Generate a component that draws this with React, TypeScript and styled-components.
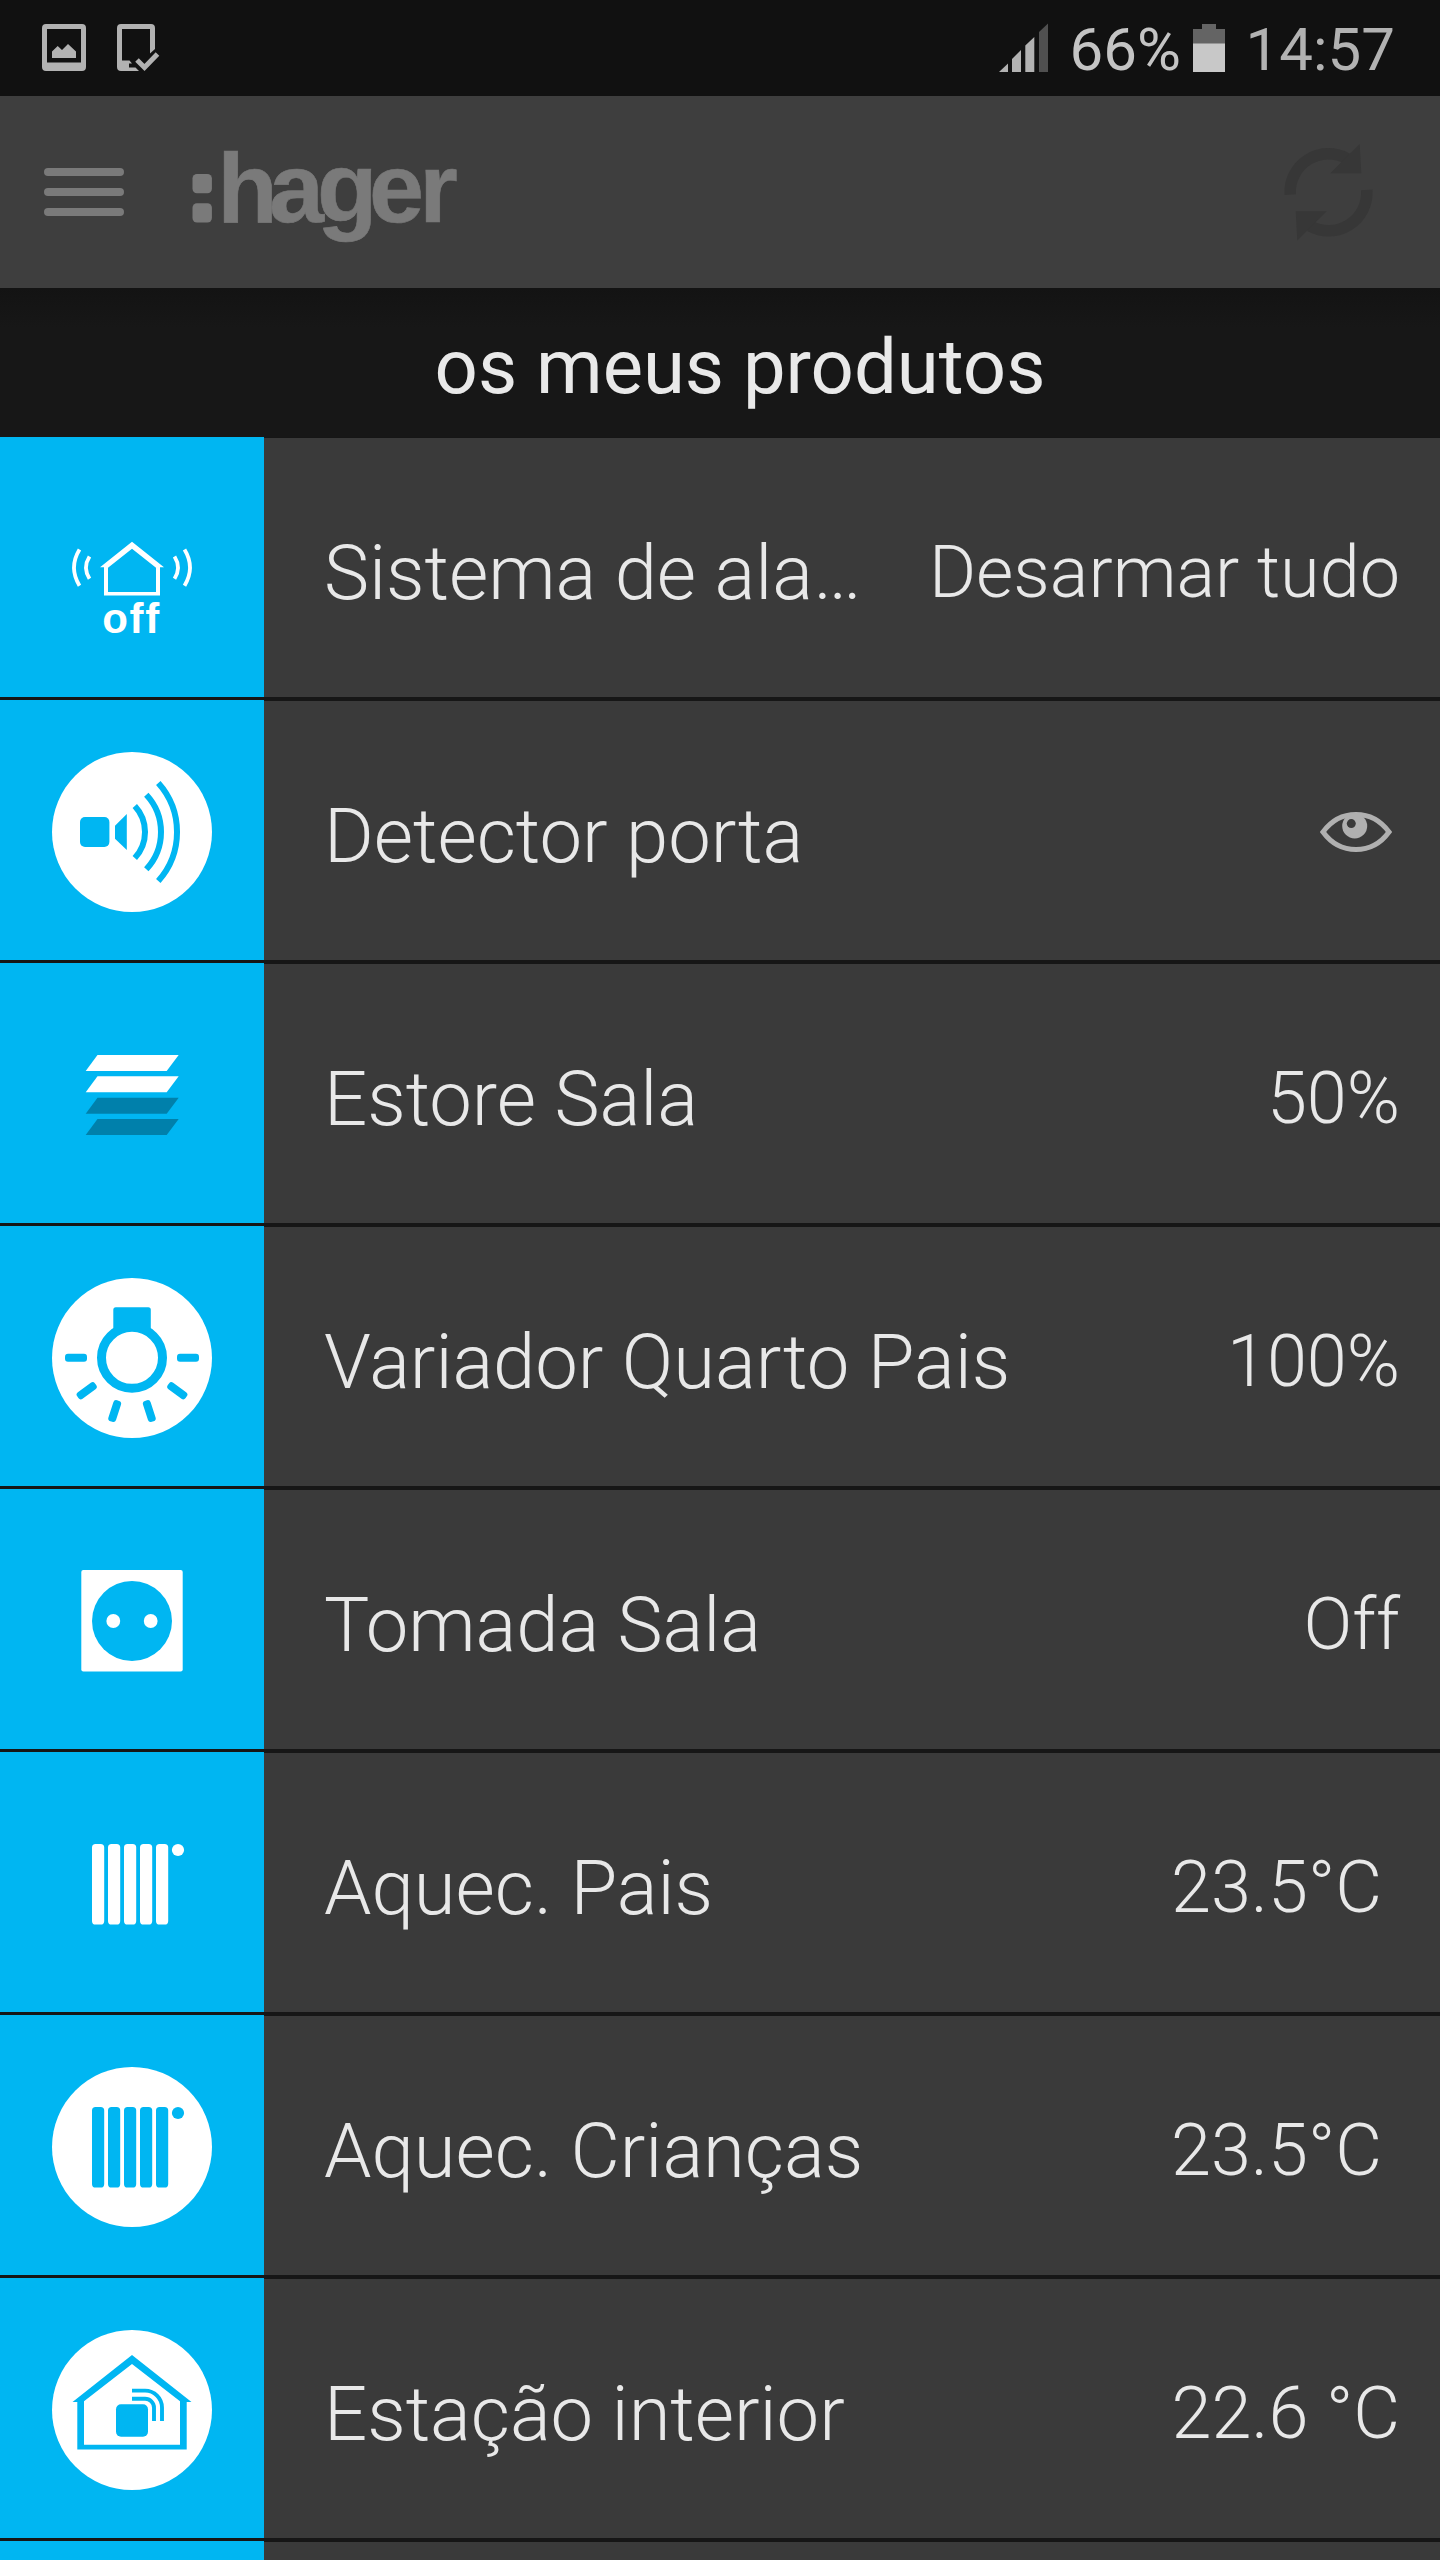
import React from "react";
import styled, { createGlobalStyle } from "styled-components";

const BLUE = "#00b6f2";

const GlobalStyle = createGlobalStyle`
  *, *::before, *::after { box-sizing: border-box; }
  body { margin: 0; background: #161616; }
  svg { display: block; flex: none; }
`;

const Screen = styled.div`
  width: 1440px;
  height: 2560px;
  overflow: hidden;
  display: flex;
  flex-direction: column;
  background: #161616;
  color: #e8e8e8;
  font-family: Roboto, "Liberation Sans", sans-serif;
`;

const StatusBar = styled.div`
  flex: none;
  height: 96px;
  padding: 0 45px 0 42px;
  display: flex;
  align-items: center;
  justify-content: space-between;
  background: #111111;
`;

const StatusGroup = styled.div<{ $gap?: number }>`
  display: flex;
  align-items: center;
  gap: ${(p) => p.$gap ?? 0}px;
`;

const StatusText = styled.span<{ $color: string; $width: number; $after?: number }>`
  width: ${(p) => p.$width}px;
  margin-right: ${(p) => p.$after ?? 0}px;
  font-size: 60px;
  line-height: 70px;
  padding-top: 3px;
  text-align: right;
  white-space: nowrap;
  color: ${(p) => p.$color};
`;

const AppBar = styled.header`
  flex: none;
  height: 192px;
  padding: 0 64px 0 44px;
  display: flex;
  align-items: center;
  background: #3e3e3e;
`;

const MenuButton = styled.div`
  width: 80px;
  display: flex;
  flex-direction: column;
  gap: 12px;
`;

const MenuLine = styled.span`
  height: 8px;
  border-radius: 4px;
  background: #7a7a7a;
`;

const Logo = styled.svg`
  margin-left: 64px;
  margin-right: auto;
`;

const TitleBar = styled.div`
  flex: none;
  height: 149px;
  padding: 8px 0 0 40px;
  display: flex;
  align-items: center;
  justify-content: center;
  background: linear-gradient(#131313, #171717 40px);
`;

const Title = styled.h1`
  margin: 0;
  font-size: 76px;
  line-height: 90px;
  font-weight: 400;
  color: #e9e9e9;
`;

const List = styled.div`
  display: flex;
  flex-direction: column;
`;

const Row = styled.div`
  flex: none;
  height: 263px;
  display: grid;
  grid-template-columns: 264px 1fr;
`;

const IconCell = styled.div`
  height: 260px;
  overflow: hidden;
  background: ${BLUE};
`;

const RowBody = styled.div`
  height: 259px;
  margin-top: 1px;
  padding: 0 40px 0 60px;
  display: flex;
  align-items: center;
  justify-content: space-between;
  background: #3a3a3a;
`;

const Label = styled.span`
  padding-top: 11px;
  font-size: 76px;
  line-height: 90px;
  font-weight: 300;
  letter-spacing: -0.05px;
  white-space: nowrap;
`;

const Value = styled.span<{ $inset?: number }>`
  padding-top: 11px;
  margin-right: ${(p) => p.$inset ?? 0}px;
  font-size: 72px;
  line-height: 86px;
  font-weight: 300;
  white-space: nowrap;
`;

const EyeIcon = styled.svg`
  margin: 3px 8px 0 0;
`;

const Disc = () => <circle cx="132" cy="132" r="80" fill="#fff" />;

const AlarmIcon = () => (
  <g>
    <path
      fill="#fff"
      fillRule="evenodd"
      d="M132 104.7 164 130.3H160V158.5H104V130.3H100ZM132 111.7 108 130.7V155H156V130.7Z"
    />
    <g fill="none" stroke="#fff" strokeWidth="3.8">
      <path d="M79.5 112.5Q68.5 130.6 79.5 148.7" />
      <path d="M89.5 119.5Q82.5 130.6 89.5 141.7" />
      <path d="M184.5 112.5Q195.5 130.6 184.5 148.7" />
      <path d="M174.5 119.5Q181.5 130.6 174.5 141.7" />
    </g>
    <text
      x="102.3"
      y="195.6"
      fill="#fff"
      fontFamily="'Liberation Sans', sans-serif"
      fontWeight="700"
      fontSize="42"
      letterSpacing="1.6"
    >
      off
    </text>
  </g>
);

const DetectorIcon = () => (
  <g>
    <Disc />
    <rect x="80" y="117" width="29.4" height="30" rx="5" fill={BLUE} />
    <path d="M115 125.7 126.8 114V150L115 138.7Z" fill={BLUE} />
    <g fill="none" stroke={BLUE} strokeWidth="6">
      <path d="M134.8 106A38.2 38.2 0 0 1 134.8 158" />
      <path d="M146.3 94.7A54.7 54.7 0 0 1 146.3 169.3" />
      <path d="M158.3 83A73.5 73.5 0 0 1 158.3 181" />
    </g>
  </g>
);

const ShutterIcon = () => (
  <g>
    {[92, 113.3, 134.7, 156].map((y, i) => (
      <path key={y} d={`M97.5 ${y}H178.7L166.7 ${y + 16}H85.7Z`} fill={i < 2 ? "#fff" : "#0080ab"} />
    ))}
  </g>
);

const LampIcon = () => (
  <g>
    <Disc />
    <g fill={BLUE}>
      <path d="M113.3 104V83.8Q113.3 81.3 115.8 81.3H148.3Q150.8 81.3 150.8 83.8V104L132 112Z" />
      {[0, -36, -72, -108, -144, -180].map((a) => (
        <rect
          key={a}
          x="65"
          y="127.8"
          width="22"
          height="8"
          rx="3"
          transform={`rotate(${a} 132 131.8)`}
        />
      ))}
    </g>
    <circle cx="132" cy="131.8" r="30.5" fill="#fff" stroke={BLUE} strokeWidth="9" />
  </g>
);

const SocketIcon = () => (
  <g>
    <rect x="81.3" y="81" width="101.4" height="101.6" rx="2" fill="#fff" />
    <circle cx="132" cy="132" r="40" fill={BLUE} />
    <circle cx="113.3" cy="132" r="6.9" fill="#fff" />
    <circle cx="150.7" cy="132" r="6.9" fill="#fff" />
  </g>
);

const RadiatorIcon = ({ color = "#fff" }: { color?: string }) => (
  <g fill={color}>
    {[92, 108, 124, 140, 156].map((x) => (
      <rect key={x} x={x} y="92" width="12.2" height="80.5" rx="3.6" />
    ))}
    <circle cx="178" cy="98" r="6.1" />
  </g>
);

const RadiatorDiscIcon = () => (
  <g>
    <Disc />
    <RadiatorIcon color={BLUE} />
  </g>
);

const StationIcon = () => (
  <g>
    <Disc />
    <path
      fill={BLUE}
      fillRule="evenodd"
      d="M132 77 191.5 124H186.7V171.6H77.3V124H72.5ZM132 86 84 123.2V166.7H180V123.2Z"
    />
    <rect x="116" y="126.3" width="32" height="32.5" rx="5" fill={BLUE} />
    <g fill="none" stroke={BLUE} strokeWidth="3.9">
      <path d="M132 112.6H145A17 17 0 0 1 162 129.6V143" />
      <path d="M132 120.8H145A9 9 0 0 1 154 129.8V143" />
    </g>
  </g>
);

const Eye = () => (
  <EyeIcon width="72" height="42" viewBox="0 0 72 42">
    <path
      d="M3 21C20-2.3 52-2.3 69 21C52 44.3 20 44.3 3 21Z"
      fill="none"
      stroke="#b0b0b0"
      strokeWidth="5"
    />
    <circle cx="34.7" cy="15" r="12.5" fill="#b0b0b0" />
    <circle cx="31.3" cy="12.6" r="4.5" fill="#3a3a3a" />
  </EyeIcon>
);

type Product = {
  label: string;
  icon: React.ReactNode;
  value?: React.ReactNode;
  inset?: number;
};

const products: Product[] = [
  { label: "Sistema de ala…", icon: <AlarmIcon />, value: "Desarmar tudo" },
  { label: "Detector porta", icon: <DetectorIcon /> },
  { label: "Estore Sala", icon: <ShutterIcon />, value: "50%" },
  { label: "Variador Quarto Pais", icon: <LampIcon />, value: "100%" },
  { label: "Tomada Sala", icon: <SocketIcon />, value: "Off" },
  { label: "Aquec. Pais", icon: <RadiatorIcon />, value: "23.5°C", inset: 18 },
  { label: "Aquec. Crianças", icon: <RadiatorDiscIcon />, value: "23.5°C", inset: 18 },
  { label: "Estação interior", icon: <StationIcon />, value: "22.6 °C" },
  { label: "", icon: null, value: "" },
];

export default function App() {
  return (
    <Screen>
      <GlobalStyle />
      <StatusBar>
        <StatusGroup $gap={31}>
          <svg width="44" height="48" viewBox="0 0 44 48" fill="#b2b2b2">
            <path
              fillRule="evenodd"
              d="M4 0H40Q44 0 44 4V43Q44 47 40 47H4Q0 47 0 43V4Q0 0 4 0ZM5 5V38.5H39V5Z"
            />
            <path d="M10 34V27.5L15.7 22 20 26 26 20 34 27.5V34Z" />
          </svg>
          <svg width="44" height="48" viewBox="0 0 44 48" fill="#b2b2b2">
            <path d="M4 0H34Q38 0 38 4V25L33 29.5V5H5V36.5H12.5L15 39.5H12V43.5H18.5L22 47H4Q0 47 0 43V4Q0 0 4 0Z" />
            <path d="M20 36 27.5 43.5 40.5 30" fill="none" stroke="#b2b2b2" strokeWidth="5" />
          </svg>
        </StatusGroup>
        <StatusGroup>
          <svg width="50" height="50" viewBox="0 0 50 50" fill="#b2b2b2">
            <path d="M0 49 9 40.5V49Z" />
            <path d="M13 49V36L22 27V49Z" />
            <path d="M26.3 49V22.5L35.3 14V49Z" />
            <path d="M40 49V9L49 .5V49Z" fill="#505050" />
          </svg>
          <StatusText $color="#c4c4c4" $width={132} $after={12}>
            66%
          </StatusText>
          <svg width="32" height="50" viewBox="0 0 32 50">
            <path d="M0 6H9V1H23V6H32V21H0Z" fill="#646464" />
            <path d="M0 20.5H32V49H0Z" fill="#c8c8c8" />
          </svg>
          <StatusText $color="#b2b2b2" $width={170}>
            14:57
          </StatusText>
        </StatusGroup>
      </StatusBar>

      <AppBar>
        <MenuButton>
          <MenuLine />
          <MenuLine />
          <MenuLine />
        </MenuButton>
        <Logo width="280" height="150" viewBox="188 117 280 150" fill="#7a7a7a">
          <rect x="192.5" y="174" width="19.4" height="19.2" rx="4.5" />
          <rect x="192.5" y="203.3" width="19.4" height="19.2" rx="4.5" />
          <text
            x="217.3 269 317 369 419.2"
            y="222.3"
            fontFamily="'Liberation Sans', sans-serif"
            fontWeight="700"
            fontSize="99"
            stroke="#7a7a7a"
            strokeWidth="0.6"
          >
            hager
          </text>
        </Logo>
        <svg width="96" height="100" viewBox="1280 143 96 100" fill="#373737">
          <g>
            <path
              d="M1290.2 195.7A38.3 38.3 0 0 1 1347 159.6"
              fill="none"
              stroke="#373737"
              strokeWidth="11.5"
            />
            <path d="M1359.7 145 1361.3 174.3H1330.3Z" />
          </g>
          <g transform="rotate(180 1328.5 193.3)">
            <path
              d="M1290.2 195.7A38.3 38.3 0 0 1 1347 159.6"
              fill="none"
              stroke="#373737"
              strokeWidth="11.5"
            />
            <path d="M1359.7 145 1361.3 174.3H1330.3Z" />
          </g>
        </svg>
      </AppBar>

      <TitleBar>
        <Title>os meus produtos</Title>
      </TitleBar>

      <List>
        {products.map((p, i) => (
          <Row key={i}>
            <IconCell>
              <svg width="264" height="264" viewBox="0 0 264 264">
                {p.icon}
              </svg>
            </IconCell>
            <RowBody>
              <Label>{p.label}</Label>
              {p.value === undefined ? <Eye /> : <Value $inset={p.inset}>{p.value}</Value>}
            </RowBody>
          </Row>
        ))}
      </List>
    </Screen>
  );
}
